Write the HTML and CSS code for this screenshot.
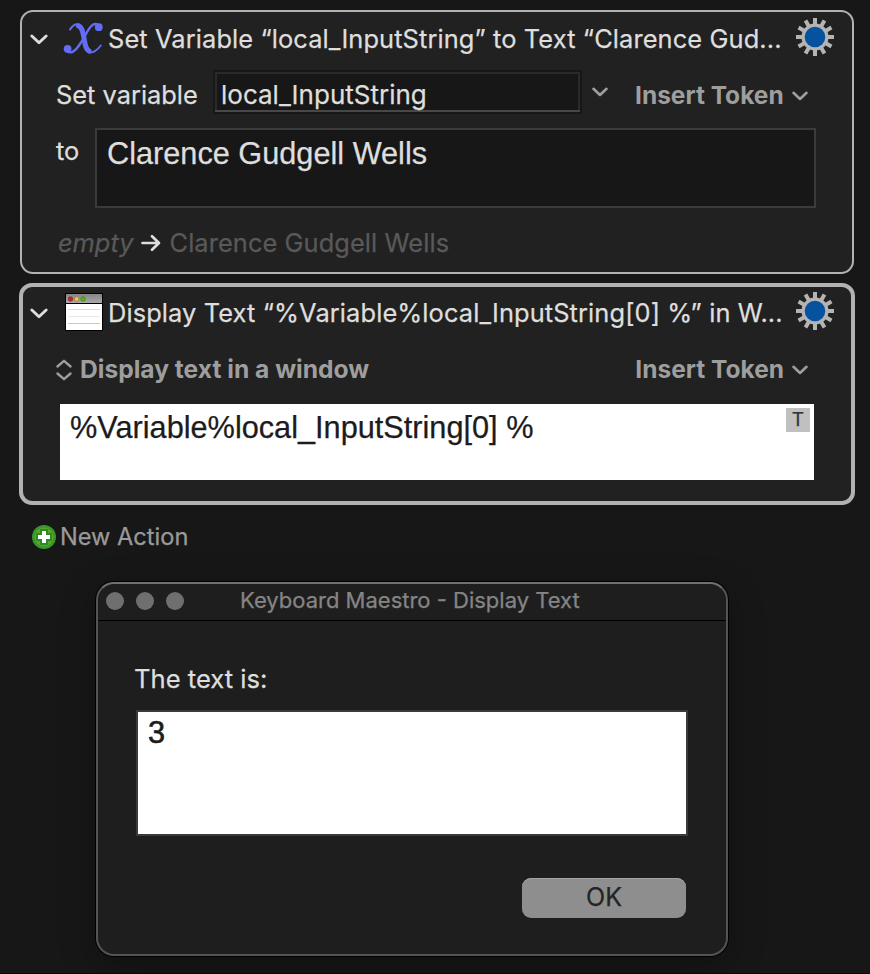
FILE: index.html
```html
<!DOCTYPE html>
<html lang="en">
<head>
<meta charset="utf-8">
<title>Keyboard Maestro</title>
<link rel="stylesheet" href="styles.css">
</head>
<body>
<svg class="defs" width="0" height="0" aria-hidden="true">
  <defs>
    <symbol id="gear" viewBox="-19 -19 38 38">
      <g stroke="#b4b4b4" stroke-width="4">
        <path d="M0-19V19M-19 0H19"/>
        <path d="M0-19V19M-19 0H19" transform="rotate(30)"/>
        <path d="M0-19V19M-19 0H19" transform="rotate(60)"/>
      </g>
      <circle r="13.500" fill="#b4b4b4"/>
      <circle r="10.300" fill="#07529f"/>
    </symbol>
    <symbol id="chev" viewBox="0 0 16 10">
      <path d="M1.500 1.800 8 8 14.500 1.800" fill="none" stroke="currentColor" stroke-width="2.600" stroke-linecap="round" stroke-linejoin="round"/>
    </symbol>
  </defs>
</svg>
<main class="actions">
  <section class="card">
    <header class="head">
      <svg class="disclosure"><use href="#chev"/></svg>
      <svg class="kind" viewBox="0 0 40 40">
        <g fill="none" stroke="#636cf4" stroke-linecap="round">
          <path d="M6 11.500C8.500 7.500 12 5.500 15 6.500" stroke-width="2"/>
          <path d="M14.500 7.800C18 9 19 14 20 20C21 26 21.500 31 25 33" stroke-width="5"/>
          <path d="M25 34.500C29 35 33 32.500 36.800 27.500" stroke-width="2"/>
          <path d="M34 6.700C29 4 26 9 22.500 15C20 20 17.500 24 15 27.500C11 33.500 7 36 3 33.200" stroke-width="2.400"/>
        </g>
        <circle cx="34.800" cy="9.200" r="3.900" fill="#636cf4"/>
        <circle cx="3.600" cy="30.800" r="3.900" fill="#636cf4"/>
      </svg>
      <h2 class="title"><span>Set Variable “local_InputString” to Text “Clarence Gud...</span></h2>
      <svg class="gear"><use href="#gear"/></svg>
    </header>
    <div class="row setrow">
      <span class="label">Set variable</span>
      <div class="field"><span>local_InputString</span></div>
      <svg class="pick"><use href="#chev"/></svg>
      <div class="token"><span>Insert Token</span><svg><use href="#chev"/></svg></div>
    </div>
    <div class="row torow">
      <span class="to">to</span>
      <div class="area dark">Clarence Gudgell Wells</div>
    </div>
    <div class="row result">
      <em>empty</em>
      <svg class="arrow" viewBox="0 0 20 18"><path d="M1.500 9H18M11 2.200 18 9 11 15.800" fill="none" stroke="currentColor" stroke-width="2.700" stroke-linecap="round" stroke-linejoin="round"/></svg>
      <span class="value">Clarence Gudgell Wells</span>
    </div>
  </section>

  <section class="card selected">
    <header class="head">
      <svg class="disclosure"><use href="#chev"/></svg>
      <svg class="kind" viewBox="0 0 40 40">
        <defs><linearGradient id="bar" x2="0" y2="1"><stop stop-color="#858585"/><stop offset="1" stop-color="#aaa"/></linearGradient></defs>
        <path d="M1 1H39V39H1Z" fill="#000"/>
        <path d="M2 2H38V11H2Z" fill="url(#bar)"/>
        <path d="M2 12H38V38H2Z" fill="#fff"/>
        <circle cx="6.500" cy="7" r="2.300" fill="#d3202f" stroke="#70242b" stroke-width=".6"/>
        <circle cx="12.700" cy="7" r="2.300" fill="#f7c363" stroke="#866a35" stroke-width=".6"/>
        <circle cx="19" cy="7" r="2.300" fill="#55b812" stroke="#37721a" stroke-width=".6"/>
        <path d="M4 17.500H36" stroke="#ddd"/><path d="M4 24.500H36" stroke="#e8e8e8"/><path d="M4 31.500H36" stroke="#c8c8c8"/>
      </svg>
      <h2 class="title"><span>Display Text “%Variable%local_InputString[0] %” in W...</span></h2>
      <svg class="gear"><use href="#gear"/></svg>
    </header>
    <div class="row mode">
      <svg class="updown" viewBox="0 0 16 22"><path d="M1.500 7.500 8 1.800 14.500 7.500M1.500 14.500 8 20.200 14.500 14.500" fill="none" stroke="currentColor" stroke-width="2.400" stroke-linecap="round" stroke-linejoin="round"/></svg>
      <span class="modename">Display text in a window</span>
      <div class="token"><span>Insert Token</span><svg><use href="#chev"/></svg></div>
    </div>
    <div class="area light">%Variable%local_InputString[0] %<span class="badge">T</span></div>
  </section>

  <div class="new">
    <svg viewBox="0 0 24 24"><circle cx="12" cy="12" r="12" fill="#38962b"/><circle cx="12" cy="12" r="9.500" fill="#58a52e"/><path d="M8 4H16V8H20V16H16V20H8V16H4V8H8Z" fill="#2f8a26"/><path d="M10 6H14V10H18V14H14V18H10V14H6V10H10Z" fill="#fff"/></svg>
    <span>New Action</span>
  </div>
</main>

<section class="dialog">
  <header class="bar"><i></i><i></i><i></i><span>Keyboard Maestro - Display Text</span></header>
  <div class="body">
    <p>The text is:</p>
    <div class="output">3</div>
    <button class="ok">OK</button>
  </div>
</section>
</body>
</html>
```

FILE: styles.css
```css
* { box-sizing: border-box; }
body { margin: 0; height: 974px; overflow: hidden; background: #171717; color: #dededd; font-family: Inter, "Liberation Sans", sans-serif; font-size: 25.4px; -webkit-text-stroke: .25px; border-bottom: 1px solid #0c080a; }
.defs { position: absolute; }
svg { display: block; flex: none; }
span, em { white-space: nowrap; }
.actions { padding: 10px 15px 0 19px; height: 582px; }
.card { height: 264px; margin: 0 1px; border: 2px solid #b2b2b2; border-radius: 13px; background: #212121; }
.card.selected { margin: 9px 0 0; height: 222px; border-width: 4px; }
.head { display: flex; align-items: center; height: 54px; padding-left: 8px; }
.selected .head { height: 52px; padding-left: 7px; }
.disclosure { width: 18px; height: 11px; }
.kind { width: 40px; height: 40px; margin: -2px 0 0 16px; overflow: visible; }
.title { margin: 0 0 0 4px; width: 688px; font-size: 25.4px; font-weight: 400; line-height: 32px; letter-spacing: .11px; }
.gear { width: 38px; height: 38px; margin-top: -4px; }
.row { display: flex; }
.setrow { height: 62px; align-items: flex-start; padding: 4px 0 0 34px; }
.label { width: 157px; line-height: 50px; }
.field { width: 369px; height: 44px; border: 2px solid #171717; background: #171717; padding: 0 6px; font-size: 26px; line-height: 46px; box-shadow: inset 0 -2px 0 #484848, inset 0 0 0 2px #2a2a2a; }
.pick { width: 16px; height: 10px; margin: 17px 0 0 10px; color: #9e9e9e; }
.token { display: flex; align-items: center; font-size: 24.5px; font-weight: 700; color: #9e9e9e; line-height: 50px; margin-left: 27px; -webkit-text-stroke: 0; }
.token svg { width: 16px; height: 10px; margin: 2px 0 0 8px; }
.torow { height: 80px; padding-left: 34px; }
.to { width: 39px; line-height: 46px; }
.area { font: 30.7px/36px "Liberation Sans", sans-serif; }
.dark { width: 721px; height: 80px; border: 2px solid #3b3b3b; background: #171717; padding: 6px 10px; }
.result { align-items: center; height: 69px; padding-left: 36px; color: #595959; }
.arrow { width: 20px; height: 18px; margin: 0 9px 0 7px; color: #dededd; }
.value { letter-spacing: .08px; }
.mode { align-items: center; height: 62px; padding: 0 43px 2px 33px; color: #9e9e9e; font-size: 24.6px; font-weight: 700; -webkit-text-stroke: 0; }
.updown { width: 16px; height: 22px; margin: 1px 8px 0 0; }
.mode .token { margin-left: auto; }
.light { position: relative; width: 754px; height: 76px; margin: 3px 0 0 37px; padding: 6px 10px; background: #fff; color: #1c1c1c; }
.badge { position: absolute; right: 4px; top: 4px; width: 24px; height: 24px; background: #c0c0c0; color: #333; font: 19px/24px Inter, sans-serif; text-align: center; }
.new { display: flex; align-items: center; gap: 4px; height: 40px; margin: 12px 0 0 13px; color: #9a9a9a; font-size: 23.6px; }
.new svg { width: 24px; height: 24px; }
.new span { margin-top: -2px; }
.dialog { width: 632px; height: 374px; margin-left: 96px; border: 2px solid #545454; border-top-color: #707070; border-radius: 18px; background: #1e1e1e; box-shadow: 0 0 0 1px #000, 0 10px 36px rgba(0,0,0,.3); }
.bar { display: flex; align-items: center; gap: 12px; height: 37px; padding: 0 0 2px 8px; border-bottom: 1px solid #000; color: #858585; font-size: 22px; }
.bar i { width: 18px; height: 18px; border-radius: 50%; background: #6f6f6f; }
.bar span { margin: -2px 0 0 44px; }
.body { padding: 42px 38px 0; }
p { margin: 0 0 15px -2px; line-height: 32px; font-size: 25.6px; }
.output { width: 552px; height: 126px; border: 2px solid #3b3b3b; background: #fff; color: #1c1c1c; padding: 3px 10px; font: 30.7px/36px "Liberation Sans", sans-serif; -webkit-text-stroke: .6px; }
.ok { display: block; width: 164px; height: 40px; margin: 42px 0 0 386px; padding: 0 0 2px; border: 0; border-radius: 9px; background: #8e8e8e; box-shadow: inset 0 1px #a5a5a5; color: #242424; font: 25px/36px Inter, sans-serif; }
```
